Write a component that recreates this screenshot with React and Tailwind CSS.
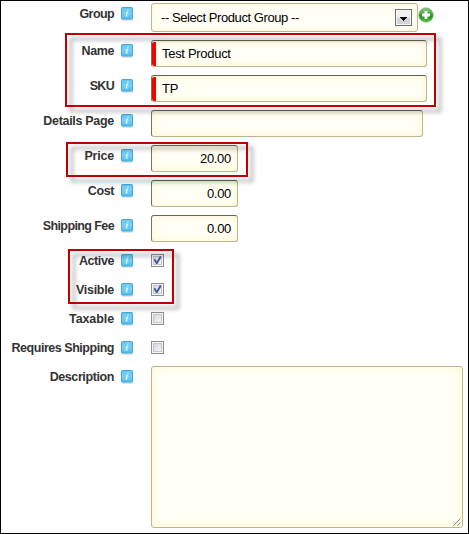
function InfoIcon() {
  return (
    <svg className="mt-[4px] ml-[7px] h-[15px] w-[13px] shrink-0" viewBox="0 0 13 15">
      <defs>
        <linearGradient id="info" x1="0" y1="0" x2="0" y2="1">
          <stop offset="0" stopColor="#62c6f2" />
          <stop offset="0.5" stopColor="#7ccff2" />
          <stop offset="1" stopColor="#4dbdf0" />
        </linearGradient>
      </defs>
      <rect x="0.5" y="12" width="11.5" height="1.8" rx="0.7" fill="#c9d3d8" opacity="0.8" />
      <rect x="0.5" y="0.5" width="11" height="11.5" rx="0.8" fill="url(#info)" stroke="#45a9dc" />
      <path d="M6.4 2.4h1.3l-.3 1.3H6.1zM5.1 4.7h2L6 8.7h.8l-.3.9H4.5l1-4h-.6z" fill="#e4f6fd" />
    </svg>
  );
}

function Field({ label, height, tracking, children }) {
  return (
    <div className={`flex items-start ${height}`}>
      <div className={`w-[113px] shrink-0 pt-[4px] text-right text-[12.5px] leading-[14px] font-bold whitespace-nowrap text-[#333] ${tracking}`}>
        {label}
      </div>
      <InfoIcon />
      <div className="ml-[17px] flex">{children}</div>
    </div>
  );
}

const box =
  "rounded-[3px] border border-t-[#6a6453] border-l-[#7b735a] border-r-[#bdb58b] border-b-[#bdb58b] bg-[#fffff5] shadow-[inset_0_0_6px_2px_#fdf8da]";

function Input({ width, children, required, right }) {
  return (
    <div className={`relative flex h-[27px] items-center overflow-hidden text-[13px] leading-[15px] tracking-[-0.3px] text-black ${box} ${width} ${right ? "justify-end pr-[6px]" : "pl-[10px]"}`}>
      {required && <span className="absolute top-[1px] left-0 h-[24px] w-[4px] rounded-l-[2px] bg-[#f60000]" />}
      {children}
    </div>
  );
}

function Check({ on }) {
  return (
    <svg className="mt-[4px] h-[13px] w-[13px]" viewBox="0 0 13 13">
      <defs>
        <linearGradient id="tick" x1="0" y1="0" x2="1" y2="1">
          <stop offset="0" stopColor="#cfd3d8" />
          <stop offset="1" stopColor="#f8f8f8" />
        </linearGradient>
      </defs>
      <rect x="0.5" y="0.5" width="12" height="12" fill="#f4f4f4" stroke="#8e8f8f" />
      <rect x="2.5" y="2.5" width="8" height="8" fill="url(#tick)" stroke="#c4c8cc" />
      {on && <path d="M3 5.2L4.6 5.2L5.8 7.6L8.8 2.2L10.2 2.2L10 4L6.4 10H5.2L3 6.6z" fill="#46569c" />}
    </svg>
  );
}

function Highlight({ place }) {
  return (
    <div className={`pointer-events-none absolute border-2 border-[#c00000] drop-shadow-[5px_5px_2px_rgba(0,0,0,0.38)] ${place}`} />
  );
}

export default function App() {
  return (
    <div className="relative h-[534px] w-[469px] overflow-hidden border border-black bg-white pt-[2px] font-['Liberation_Sans',Arial,sans-serif]">
      <Field label="Group" height="h-[37px]" tracking="tracking-[-0.6px]">
        <div className="flex h-[29px] w-[267px] items-center justify-between rounded-[3px] border border-[#bdb58b] bg-[#fffff5] pr-[5px] pl-[9px] text-[13px] leading-[15px] tracking-[-0.42px] text-black shadow-[inset_0_0_4px_1px_#fdf8da]">
          <span>-- Select Product Group --</span>
          <svg className="h-[17px] w-[17px]" viewBox="0 0 17 17">
            <rect x="0.5" y="0.5" width="16" height="16" fill="#f6f6f6" stroke="#707070" />
            <rect x="2" y="2" width="13" height="6.5" fill="#f0f0f0" />
            <rect x="2" y="8.5" width="13" height="6.5" fill="#d5d5d5" />
            <path d="M5 8h7v1h-1v1h-1v1H9v1H8v-1H7v-1H6V9H5z" fill="#000" />
          </svg>
        </div>
        <svg className="mt-[4px] h-[16px] w-[16px]" viewBox="0 0 16 16">
          <defs>
            <linearGradient id="plus" x1="0" y1="0" x2="0" y2="1">
              <stop offset="0" stopColor="#8fc98a" />
              <stop offset="0.45" stopColor="#3fa535" />
              <stop offset="0.6" stopColor="#1f8f18" />
              <stop offset="1" stopColor="#5cc94a" />
            </linearGradient>
          </defs>
          <circle cx="8" cy="8" r="7.2" fill="url(#plus)" stroke="#5fa55a" strokeWidth="0.6" />
          <path d="M6.5 4h3v2.5H12v3H9.500V12h-3V9.500H4v-3h2.500z" fill="#fff" />
        </svg>
      </Field>
      <Field label="Name" height="h-[35px]" tracking="tracking-[-0.4px]">
        <Input width="w-[276px]" required>Test Product</Input>
      </Field>
      <Field label="SKU" height="h-[35px]" tracking="tracking-[-0.7px]">
        <Input width="w-[276px]" required>TP</Input>
      </Field>
      <Field label="Details Page" height="h-[35px]" tracking="tracking-[-0.3px]">
        <Input width="w-[272px]" />
      </Field>
      <Field label="Price" height="h-[35px]" tracking="tracking-[-0.2px]">
        <Input width="w-[87px]" right>20.00</Input>
      </Field>
      <Field label="Cost" height="h-[35px]" tracking="tracking-[-0.4px]">
        <Input width="w-[87px]" right>0.00</Input>
      </Field>
      <Field label="Shipping Fee" height="h-[35px]" tracking="tracking-[-0.6px]">
        <Input width="w-[87px]" right>0.00</Input>
      </Field>
      <Field label="Active" height="h-[29px]" tracking="tracking-[-0.4px]"><Check on /></Field>
      <Field label="Visible" height="h-[29px]" tracking="tracking-[-0.3px]"><Check on /></Field>
      <Field label="Taxable" height="h-[29px]" tracking="tracking-[-0.1px]"><Check /></Field>
      <Field label="Requires Shipping" height="h-[29px]" tracking="tracking-[-0.47px]"><Check /></Field>
      <Field label="Description" height="h-[162px]" tracking="tracking-[-0.4px]">
        <div className="flex h-[162px] w-[312px] items-end justify-end rounded-[3px] border border-[#bdb58b] bg-[#fffff5] shadow-[inset_0_0_6px_2px_#fdf8da]">
          <svg className="mr-[1px] mb-[1px] h-[8px] w-[8px]" viewBox="0 0 8 8">
            <path d="M0.5 7.5L7.5 0.5M4.5 7.5L7.5 4.5" stroke="#444" strokeWidth="1" strokeDasharray="1.1 0.3" />
          </svg>
        </div>
      </Field>

      <Highlight place="top-[32px] left-[64px] h-[74px] w-[371px]" />
      <Highlight place="top-[141px] left-[65px] h-[35px] w-[182px]" />
      <Highlight place="top-[248px] left-[67px] h-[55px] w-[106px]" />
    </div>
  );
}
